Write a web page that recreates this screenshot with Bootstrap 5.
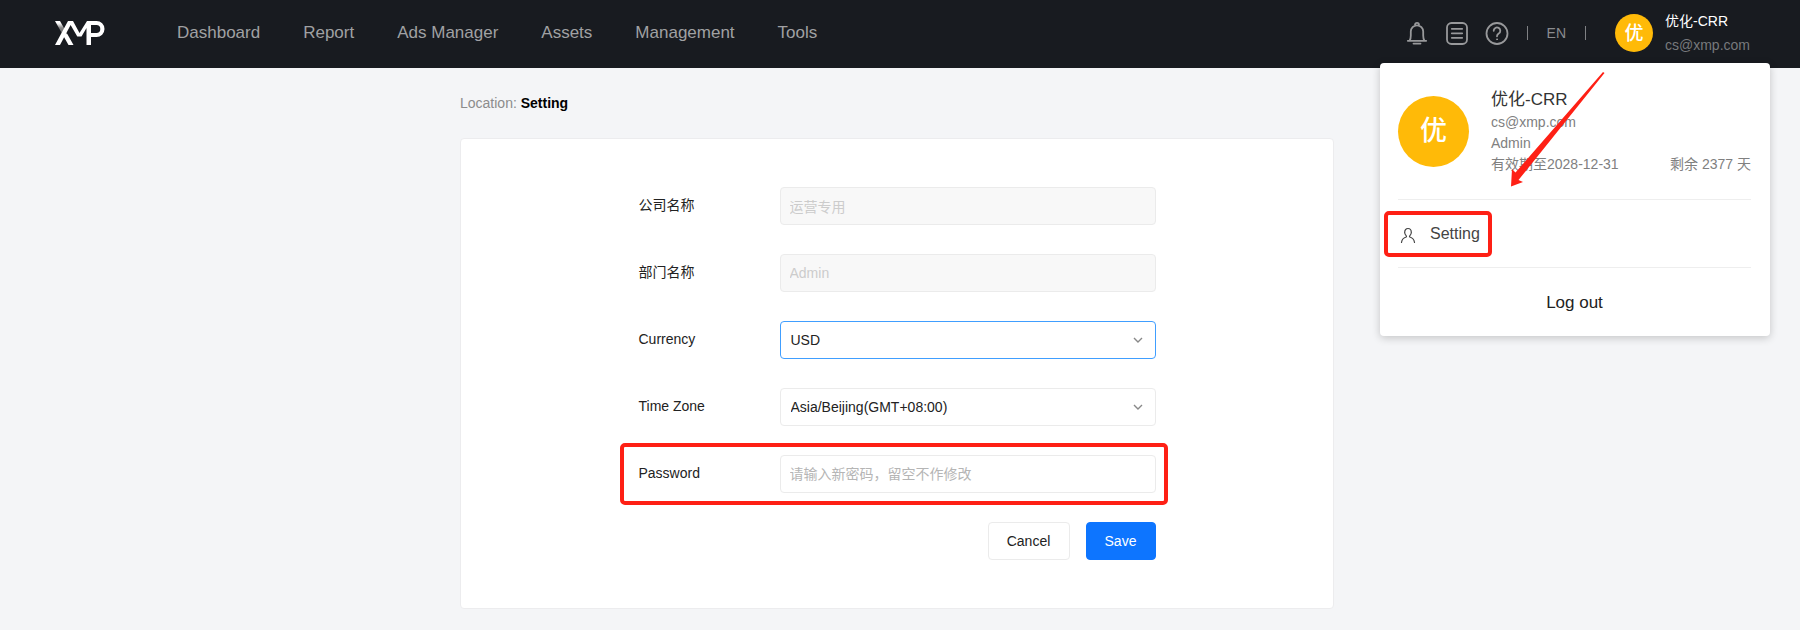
<!DOCTYPE html>
<html lang="en">
<head>
<meta charset="utf-8">
<meta name="viewport" content="width=device-width, initial-scale=1">
<title>XMP - Setting</title>
<link rel="stylesheet" href="https://cdn.jsdelivr.net/npm/bootstrap@5.3.0/dist/css/bootstrap.min.css">
<style>
  body {
    background: #f4f5f7;
    color: #222;
    font-family: "Liberation Sans", "Noto Sans CJK SC", sans-serif;
    font-size: 14px;
    line-height: 21px;
  }
  .topbar { background: #181b20; height: 68px; padding: 0 50px 2px 55px; }
  .brand { margin-right: 72px; line-height: 0; }
  .main-nav { gap: 43px; }
  .main-nav a { color: #a0a1a3; font-size: 17px; padding: 0; line-height: 24px; }
  .tools { gap: 16px; color: #98999b; margin-right: 18px; }
  .icon-btn { background: none; border: 0; padding: 0; color: inherit; line-height: 0; }
  .sep { width: 1px; height: 14px; background: #7f8184; }
  .lang { gap: 19px; margin-right: 29px; color: #8a8c8f; }
  .lang a { color: inherit; text-decoration: none; }
  .avatar { width: 38px; height: 38px; background: #ffba08; color: #fff; font-size: 19px; font-weight: 500; }
  .avatar-lg { width: 71px; height: 71px; font-size: 27px; }
  .who { gap: 3px; }
  .who-mail { color: #77797c; }

  .user-menu {
    top: 63px; right: 30px; width: 390px;
    background: #fff; border-radius: 4px;
    box-shadow: 0 2px 8px rgba(0, 0, 0, .2);
    padding: 25px 19px 0 18px;
    z-index: 10;
  }
  .profile { gap: 22px; padding-bottom: 24px; border-bottom: 1px solid #eee; color: #808080; }
  .profile-name { font-size: 17px; line-height: 24px; color: #333; }
  .menu-row { height: 68px; border-bottom: 1px solid #eee; }
  .menu-link { color: #444; font-size: 16px; line-height: 24px; text-decoration: none; gap: 12px; }
  .logout { height: 68px; font-size: 17px; color: #222; background: none; border: 0; }
  .marked::after {
    content: ""; position: absolute; border: 4px solid #fe2015; border-radius: 5px; pointer-events: none;
  }
  .menu-link.marked::after { inset: -11px -12px -11px -14px; }
  .field.marked::after { inset: -12px -12px -12px -19px; }
  .arrow { top: 8px; left: 129px; pointer-events: none; }

  main { padding-right: 6px; }
  .page { max-width: 874px; }
  .crumb { padding: 25px 0 24px; color: #8c8c8c; }
  .crumb strong { color: #000; }
  .panel { background: #fff; border: 1px solid #ececee; border-radius: 4px; padding: 48px 0; }
  .settings { width: 517px; margin: 0 auto; gap: 29px; }
  .field label { width: 141px; padding-bottom: 2px; }
  .field .form-control, .field .form-select {
    height: 38px; border-color: #ebebeb; border-radius: 4px; padding: 0 8px 0 9px;
    font-size: 14px; line-height: 21px; color: #222; flex: 1;
  }
  .field .form-control:disabled { background: #f8f8f8; color: #ccc; }
  .field .form-control::placeholder { color: #b5b5b5; }
  .field .form-select {
    padding-left: 10px;
    background-image: url("data:image/svg+xml,%3csvg xmlns='http://www.w3.org/2000/svg' viewBox='0 0 12 12'%3e%3cpath d='M2 4l4 4 4-4' fill='none' stroke='%23888' stroke-width='1.4'/%3e%3c/svg%3e");
    background-size: 12px 12px; background-position: right 11px center;
  }
  .field .form-select.is-active { border-color: #409eff; }
  .act { height: 38px; border-radius: 4px; font-size: 14px; line-height: 21px; padding: 0; }
  .act-cancel { width: 82px; border-color: #ebebeb; color: #222; background: #fff; }
  .act-save { width: 70px; background: #0d75ff; border-color: #0d75ff; color: #fff; }
</style>
</head>
<body>
<header class="topbar d-flex align-items-center position-relative">
  <a class="brand" href="#" aria-label="XMP">
    <svg width="50" height="26" viewBox="0 0 50 26" fill="none">
      <defs>
        <linearGradient id="fade" x1="0" y1="0" x2="0" y2="26" gradientUnits="userSpaceOnUse">
          <stop offset="0" stop-color="#fff"/><stop offset=".12" stop-color="#fff"/>
          <stop offset=".3" stop-color="#888"/><stop offset=".5" stop-color="#666"/>
          <stop offset=".56" stop-color="#fff"/><stop offset="1" stop-color="#fff"/>
        </linearGradient>
      </defs>
      <path d="M0 1h5L18.500 25H13.500z" fill="url(#fade)"/>
      <path d="M0 25L13 1h5l6.500 12L32 1h9.500a7.600 7.600 0 0 1 0 16H36v8h-4.500V8l-5 8.500h-4.200L15.600 5 5 25zM36 5v8h5.300a4 4 0 0 0 0-8z" fill="#fff" fill-rule="evenodd"/>
    </svg>
  </a>
  <nav class="nav main-nav flex-nowrap">
    <a class="nav-link" href="#">Dashboard</a>
    <a class="nav-link" href="#">Report</a>
    <a class="nav-link" href="#">Ads Manager</a>
    <a class="nav-link" href="#">Assets</a>
    <a class="nav-link" href="#">Management</a>
    <a class="nav-link" href="#">Tools</a>
  </nav>
  <div class="tools d-flex align-items-center ms-auto">
    <button class="icon-btn" type="button" aria-label="Notifications">
      <svg width="24" height="24" viewBox="0 0 24 24" fill="none" stroke="currentColor" stroke-width="1.800" stroke-linecap="round" stroke-linejoin="round">
        <path d="M2.800 19.800h18.400M4.600 19.800c1-1.800 1.200-3 1.200-5.300V10.500a6.200 6.200 0 0 1 12.400 0v4c0 2.300.2 3.500 1.200 5.300M10 3.800a2 2 0 0 1 4 0M8.500 22.600h7"/>
      </svg>
    </button>
    <button class="icon-btn" type="button" aria-label="News">
      <svg width="24" height="24" viewBox="0 0 24 24" fill="none" stroke="currentColor" stroke-width="1.800" stroke-linecap="round">
        <rect x="2" y="2" width="20" height="21" rx="4.500"/><path d="M6.800 7.800h10.400M6.800 12.300h10.400M6.800 16.800h10.400"/>
      </svg>
    </button>
    <button class="icon-btn" type="button" aria-label="Help">
      <svg width="24" height="24" viewBox="0 0 24 24" fill="none" stroke="currentColor" stroke-width="1.800" stroke-linecap="round">
        <circle cx="12" cy="12.500" r="10.500"/><path d="M8.700 9.800a3.300 3.300 0 1 1 5 2.800c-1.200.8-1.700 1.200-1.700 2.700"/><circle cx="12" cy="18.300" r=".5" fill="currentColor" stroke-width="1"/>
      </svg>
    </button>
  </div>
  <div class="lang d-flex align-items-center">
    <span class="sep"></span><a href="#">EN</a><span class="sep"></span>
  </div>
  <div class="d-flex align-items-center gap-2">
    <div class="avatar rounded-circle d-flex align-items-center justify-content-center me-1">优</div>
    <div class="who d-flex flex-column">
      <span class="text-white">优化-CRR</span>
      <span class="who-mail">cs@xmp.com</span>
    </div>
  </div>

  <div class="user-menu position-absolute">
    <div class="profile d-flex">
      <div class="avatar avatar-lg rounded-circle d-flex align-items-center justify-content-center flex-shrink-0 mt-2">优</div>
      <div class="flex-grow-1">
        <div class="profile-name">优化-CRR</div>
        <div>cs@xmp.com</div>
        <div>Admin</div>
        <div class="d-flex justify-content-between"><span>有效期至2028-12-31</span><span>剩余 2377 天</span></div>
      </div>
    </div>
    <div class="menu-row d-flex align-items-center">
      <a class="menu-link marked position-relative d-flex align-items-center" href="#">
        <svg width="20" height="20" viewBox="0 0 20 20" fill="none" stroke="currentColor" stroke-width="1.200" stroke-linecap="round">
          <path d="M3.500 18.500c.3-3 2-4.700 4.700-5.500.4-.3.400-.8 0-1.200a4.200 4.200 0 0 1-1.500-3.400C6.700 6 8 4.500 10 4.500s3.300 1.500 3.300 3.900a4.200 4.200 0 0 1-1.500 3.400c-.4.400-.4.900 0 1.200 2.700.8 4.400 2.500 4.700 5.500"/>
        </svg>
        Setting
      </a>
    </div>
    <button class="logout w-100" type="button">Log out</button>
    <svg class="arrow position-absolute" width="98" height="118" viewBox="0 0 98 118" aria-hidden="true">
      <path d="M2 115.500L3 98l3.500 3.500L94 1l1.500 1L9.500 109l4.500 2z" fill="#fe2015"/>
    </svg>
  </div>
</header>

<main>
  <div class="page mx-auto">
    <div class="crumb">Location: <strong>Setting</strong></div>
    <section class="panel">
      <form class="settings d-flex flex-column">
        <div class="field d-flex align-items-center">
          <label for="company">公司名称</label>
          <input class="form-control" id="company" type="text" value="运营专用" disabled>
        </div>
        <div class="field d-flex align-items-center">
          <label for="dept">部门名称</label>
          <input class="form-control" id="dept" type="text" value="Admin" disabled>
        </div>
        <div class="field d-flex align-items-center">
          <label for="currency">Currency</label>
          <select class="form-select is-active" id="currency"><option>USD</option></select>
        </div>
        <div class="field d-flex align-items-center">
          <label for="zone">Time Zone</label>
          <select class="form-select" id="zone"><option>Asia/Beijing(GMT+08:00)</option></select>
        </div>
        <div class="field marked position-relative d-flex align-items-center">
          <label for="pw">Password</label>
          <input class="form-control" id="pw" type="password" placeholder="请输入新密码，留空不作修改">
        </div>
        <div class="d-flex justify-content-end gap-3">
          <button class="btn act act-cancel" type="button">Cancel</button>
          <button class="btn act act-save" type="submit">Save</button>
        </div>
      </form>
    </section>
  </div>
</main>
<script src="https://cdn.jsdelivr.net/npm/bootstrap@5.3.0/dist/js/bootstrap.bundle.min.js"></script>
</body>
</html>
